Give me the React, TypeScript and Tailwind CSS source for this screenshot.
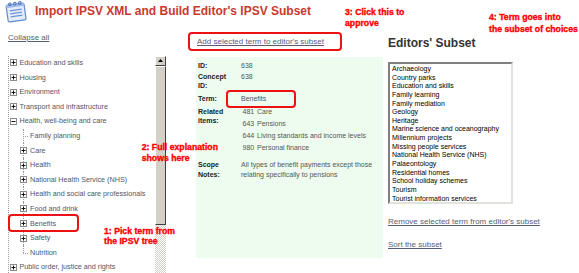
type TreeNode = {
  label: string;
  kind: "plus" | "minus" | "leaf";
  children?: TreeNode[];
};

const tree: TreeNode[] = [
  { label: "Education and skills", kind: "plus" },
  { label: "Housing", kind: "plus" },
  { label: "Environment", kind: "plus" },
  { label: "Transport and infrastructure", kind: "plus" },
  {
    label: "Health, well-being and care",
    kind: "minus",
    children: [
      { label: "Family planning", kind: "leaf" },
      { label: "Care", kind: "plus" },
      { label: "Health", kind: "plus" },
      { label: "National Health Service (NHS)", kind: "plus" },
      { label: "Health and social care professionals", kind: "plus" },
      { label: "Food and drink", kind: "plus" },
      { label: "Benefits", kind: "plus" },
      { label: "Safety", kind: "plus" },
      { label: "Nutrition", kind: "leaf" },
    ],
  },
  { label: "Public order, justice and rights", kind: "plus" },
];

const subset = [
  "Archaeology",
  "Country parks",
  "Education and skills",
  "Family learning",
  "Family mediation",
  "Geology",
  "Heritage",
  "Marine science and oceanography",
  "Millennium projects",
  "Missing people services",
  "National Health Service (NHS)",
  "Palaeontology",
  "Residential homes",
  "School holiday schemes",
  "Tourism",
  "Tourist information services",
];

const related = [
  ["481", "Care"],
  ["643", "Pensions"],
  ["644", "Living standards and income levels"],
  ["980", "Personal finance"],
];

function ToggleBox({ minus }: { minus?: boolean }) {
  return (
    <svg width="7" height="7" viewBox="0 0 7 7" className="shrink-0 bg-white">
      <rect x="0.5" y="0.5" width="6" height="6" fill="#fff" stroke="#8a8a8a" />
      <line x1="1.5" y1="3.5" x2="5.5" y2="3.5" stroke="#111" />
      {!minus && <line x1="3.5" y1="1.5" x2="3.5" y2="5.5" stroke="#111" />}
    </svg>
  );
}

function NotepadIcon() {
  return (
    <svg width="28" height="23" viewBox="0 0 28 23">
      <g transform="rotate(-8 14 12)">
        <rect x="5" y="4" width="18" height="17" rx="1.5" fill="#e3edfb" stroke="#5f8ad0" strokeWidth="1.2" />
        <rect x="5" y="4" width="18" height="3" fill="#9dbbe8" />
        <line x1="8" y1="10" x2="20" y2="10" stroke="#6f93d3" strokeWidth="1.2" />
        <line x1="8" y1="13" x2="20" y2="13" stroke="#6f93d3" strokeWidth="1.2" />
        <line x1="8" y1="16" x2="20" y2="16" stroke="#6f93d3" strokeWidth="1.2" />
        <circle cx="9" cy="3.5" r="1.3" fill="none" stroke="#4d74b8" />
        <circle cx="14" cy="3.5" r="1.3" fill="none" stroke="#4d74b8" />
        <circle cx="19" cy="3.5" r="1.3" fill="none" stroke="#4d74b8" />
      </g>
    </svg>
  );
}

function ChildRow({ node, last }: { node: TreeNode; last: boolean }) {
  return (
    <div className="flex h-[14.6px] items-center">
      <div className="relative h-full w-[7px] shrink-0">
        <div
          className={`absolute left-[2px] top-0 border-l border-dotted border-[#9a9a9a] ${last ? "h-1/2" : "h-full"}`}
        />
        {node.kind === "leaf" ? (
          <div className="absolute left-[2px] top-1/2 w-[5px] border-t border-dotted border-[#9a9a9a]" />
        ) : (
          <div className="absolute left-[-1px] top-[3.8px]">
            <ToggleBox />
          </div>
        )}
      </div>
      <span className="ml-[2px] whitespace-nowrap">{node.label}</span>
    </div>
  );
}

function Tree() {
  return (
    <div className="ml-[8px] border-l border-dotted border-[#9a9a9a] text-[7.2px] leading-[8px] text-[#535566]">
      {tree.map((node) => (
        <div key={node.label}>
          <div className="flex h-[14.6px] items-center pl-[1px]">
            <ToggleBox minus={node.kind === "minus"} />
            <span className="ml-[2.5px] whitespace-nowrap">{node.label}</span>
          </div>
          {node.children && (
            <div className="ml-[12px]">
              {node.children.map((c, i) => (
                <ChildRow key={c.label} node={c} last={i === node.children!.length - 1} />
              ))}
            </div>
          )}
        </div>
      ))}
    </div>
  );
}

function Scrollbar() {
  return (
    <div className="flex w-[11px] shrink-0 flex-col">
      <div className="flex h-[10px] items-center justify-center border border-t-white border-l-white border-r-[#404040] border-b-[#404040] bg-[#d4d0c8]">
        <svg width="5" height="3" viewBox="0 0 5 3">
          <polygon points="2.5,0 5,3 0,3" fill="#000" />
        </svg>
      </div>
      <div className="h-[159px] border border-t-white border-l-white border-r-[#404040] border-b-[#404040] bg-[#d4d0c8]" />
      <div className="flex-1 bg-[repeating-conic-gradient(#d4d0c8_0_25%,#ffffff_0_50%)] bg-[length:2px_2px]" />
    </div>
  );
}

function Note({ lines, className }: { lines: string[]; className: string }) {
  return (
    <div
      className={`absolute whitespace-nowrap text-[8.7px] font-bold text-[#ff0000] [-webkit-text-stroke:0.35px_#ff0000] ${className}`}
    >
      {lines.map((l) => (
        <div key={l}>{l}</div>
      ))}
    </div>
  );
}

export default function App() {
  return (
    <div
      className="relative h-[273px] w-[579px] overflow-hidden bg-white"
      style={{ fontFamily: '"Liberation Sans", Arial, sans-serif' }}
    >
      <div className="flex h-[22px] items-center">
        <div className="ml-[2px]">
          <NotepadIcon />
        </div>
        <h1 className="ml-[5px] text-[12px] font-bold leading-[14px] text-[#c8392e]">
          Import IPSV XML and Build Editor's IPSV Subset
        </h1>
      </div>

      <div className="flex">
        {/* tree column */}
        <div className="flex w-[166px] shrink-0 flex-col">
          <a className="ml-[8px] mt-[11px] text-[8px] leading-[10px] text-[#575d78] underline">Collapse all</a>
          <div className="mt-[12.7px] flex h-[230px]">
            <div className="flex-1 overflow-hidden">
              <Tree />
            </div>
            <Scrollbar />
          </div>
        </div>

        {/* details column */}
        <div className="ml-[30px] flex w-[187px] shrink-0 flex-col">
          <a className="ml-[1px] mt-[15px] text-[8px] leading-[10px] text-[#575d78] underline">
            Add selected term to editor's subset
          </a>
          <div className="mt-[10px] h-[201px] bg-[#edfcee] pl-[2px] text-[7px] leading-[8.5px] text-[#555]">
            <div className="mt-[4.7px] flex">
              <div className="w-[43px] font-bold text-[#222]">ID:</div>
              <div>638</div>
            </div>
            <div className="mt-[3px] flex">
              <div className="w-[43px] font-bold text-[#222]">
                Concept
                <br />
                ID:
              </div>
              <div>638</div>
            </div>
            <div className="mt-[4.7px] flex">
              <div className="w-[43px] font-bold text-[#222]">Term:</div>
              <div>Benefits</div>
            </div>
            <div className="mt-[3.5px] flex">
              <div className="w-[43px] font-bold leading-[9.3px] text-[#222]">
                Related
                <br />
                items:
              </div>
              <div className="ml-[1.5px] mt-[1px] flex flex-col">
                {related.map(([n, t]) => (
                  <div key={n} className="flex h-[12.1px]">
                    <span className="w-[14.5px]">{n}</span>
                    <span className="whitespace-nowrap">{t}</span>
                  </div>
                ))}
              </div>
            </div>
            <div className="mt-[4px] flex">
              <div className="w-[43px] font-bold leading-[9.6px] text-[#222]">
                Scope
                <br />
                Notes:
              </div>
              <div className="leading-[9.6px]">
                All types of benefit payments except those
                <br />
                relating specifically to pensions
              </div>
            </div>
          </div>
        </div>

        {/* subset column */}
        <div className="ml-[5px] flex flex-col">
          <h2 className="mt-[14px] text-[12px] font-bold leading-[14px] text-[#333]">Editors' Subset</h2>
          <div className="mt-[12px] h-[142px] w-[125px] border-2 border-t-[#808080] border-l-[#808080] border-r-[#e4e2dc] border-b-[#e4e2dc] bg-white pl-[2px] pt-[1px] text-[7px] leading-[8.64px] text-black">
            {subset.map((s) => (
              <div key={s} className="whitespace-nowrap">
                {s}
              </div>
            ))}
          </div>
          <a className="mt-[13px] text-[8px] leading-[10px] text-[#575d78] underline">
            Remove selected term from editor's subset
          </a>
          <a className="mt-[12.7px] text-[8px] leading-[10px] text-[#575d78] underline">Sort the subset</a>
        </div>
      </div>

      {/* highlight boxes */}
      <div className="absolute left-[188px] top-[32px] h-[19px] w-[154px] rounded-[4px] border-2 border-[#ee1111]" />
      <div className="absolute left-[226px] top-[89.5px] h-[18px] w-[70px] rounded-[4px] border-2 border-[#ee1111]" />
      <div className="absolute left-[8px] top-[213.5px] h-[18.5px] w-[71px] rounded-[4px] border-2 border-[#ee1111]" />

      {/* annotations */}
      <Note lines={["1: Pick term from", "the IPSV tree"]} className="left-[104px] top-[226px] leading-[10px]" />
      <Note lines={["2: Full explanation", "shows here"]} className="left-[141.7px] top-[142.4px] leading-[10.6px]" />
      <Note lines={["3: Click this to", "approve"]} className="left-[345px] top-[7px] leading-[11px]" />
      <Note lines={["4: Term goes into", "the subset of choices"]} className="left-[489px] top-[10.7px] leading-[12px]" />
    </div>
  );
}
